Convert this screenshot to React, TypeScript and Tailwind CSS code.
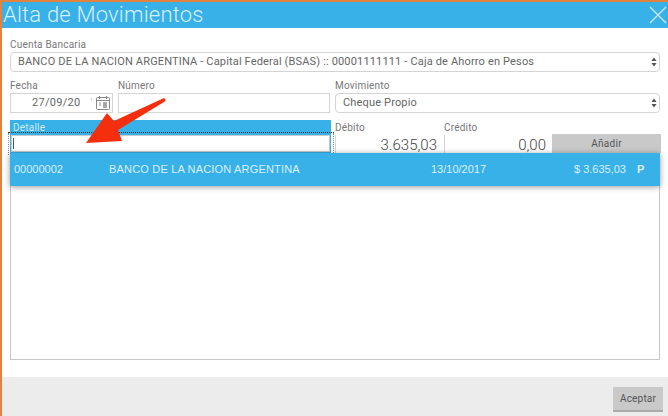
import React from "react";

const ff = { fontFamily: "Roboto, sans-serif" };

function Stepper() {
  return (
    <svg width="6" height="10" viewBox="0 0 6 10" className="shrink-0">
      <path d="M3 0.5 L5.6 4 H0.4 Z M3 9.5 L5.6 6 H0.4 Z" fill="#555" />
    </svg>
  );
}

function SelectBox({ text, className }: { text: string; className: string }) {
  return (
    <div className={`flex h-5 items-center justify-between rounded-[4px] border border-[#d4d4d4] bg-white pl-[7px] pr-[2px] text-[11px] tracking-[0.16px] text-[#666] ${className}`}>
      <span className="whitespace-nowrap">{text}</span>
      <Stepper />
    </div>
  );
}

function Label({ children }: { children: React.ReactNode }) {
  return <div className="h-[12px] text-[10px] leading-[12px] tracking-[0.2px] text-[#777]">{children}</div>;
}

export default function App() {
  return (
    <div style={ff} className="relative flex h-[416px] w-[668px] flex-col overflow-hidden border-l-2 border-t-2 border-[#e2823c] bg-white">
      <header className="flex h-[26px] shrink-0 items-center justify-between bg-[#38b0e8] pl-[1px]">
        <h1 className="text-[22px] font-light leading-[26px] tracking-[0.2px] text-[#d8f0fb]">Alta de Movimientos</h1>
        <svg width="20" height="20" viewBox="0 0 20 20">
          <path d="M2 2 L18 18 M18 2 L2 18" stroke="#cdeaf8" strokeWidth="1.3" fill="none" />
        </svg>
      </header>

      <main className="flex flex-1 flex-col pl-2 pr-[6px] pt-[11px]">
        <Label>Cuenta Bancaria</Label>
        <SelectBox text="BANCO DE LA NACION ARGENTINA - Capital Federal (BSAS) :: 00001111111 - Caja de Ahorro en Pesos" className="mt-[1px] w-[650px]" />

        <div className="mt-[8px] flex gap-[5px]">
          <div className="w-[103px]">
            <Label>Fecha</Label>
            <div className="mt-[1px] flex h-[20px] items-center justify-between border border-[#d4d4d4] pl-[21px] pr-[1px] text-[11px] tracking-[0.3px] text-[#666]">
              <span className="relative whitespace-nowrap">
                27/09/20
                <span className="ml-[10px] text-[#bbb]">'</span>
              </span>
              <svg width="16" height="16" viewBox="0 0 16 16">
                <rect x="1.5" y="2.5" width="13" height="12" rx="1" fill="none" stroke="#888" />
                <path d="M1.5 5.5 H14.5 M4.5 1 V4 M11.5 1 V4" stroke="#888" />
                <path d="M4 8 H6 M8 8 H12 M4 10 H6 M8 10 H12 M8 12 H12 M9 7 V13 M11 7 V13" stroke="#777" strokeWidth="0.8" />
              </svg>
            </div>
          </div>
          <div className="w-[212px]">
            <Label>Número</Label>
            <div className="mt-[1px] h-[20px] border border-[#d4d4d4]" />
          </div>
          <div className="w-[325px]">
            <Label>Movimiento</Label>
            <SelectBox text="Cheque Propio" className="mt-[1px] w-[325px]" />
          </div>
        </div>

        <div className="mt-[7px] flex h-[33px] gap-[4px]">
          <div className="relative w-[321px]">
            <div className="h-[15px] bg-[#38b0e8] pl-[3px] pt-[1px] text-[10px] leading-[13px] tracking-[0.2px] text-[#cdeaf8]">Detalle</div>
            <div className="relative h-[18px] bg-[#38b0e8] px-[1px]">
              <div className="h-[17px] border border-[#ccc] bg-white pl-[1px] pt-[2px]">
                <div className="h-[11px] w-px bg-[#555]" />
              </div>
            </div>
            <div className="absolute -left-[2px] -right-[3px] top-[12px] border-t border-dotted border-[#333]" />
            <div className="absolute -left-[2px] top-[13px] h-[22px] border-l border-dotted border-[#888]" />
            <div className="absolute -right-[3px] top-[13px] h-[22px] border-l border-dotted border-[#888]" />
          </div>
          <div className="w-[105px] pt-[2px]">
            <Label>Débito</Label>
            <div className="mt-[1px] flex h-[20px] items-center justify-end border-l border-[#d4d4d4] pr-[3px] text-[15px] font-light text-[#444]">3.635,03</div>
          </div>
          <div className="w-[108px] pt-[2px]">
            <Label>Crédito</Label>
            <div className="mt-[1px] flex h-[20px] items-center justify-end border-l border-[#d4d4d4] pr-[6px] text-[15px] font-light text-[#444]">0,00</div>
          </div>
          <div className="-ml-[4px] mt-[14px] flex h-[19px] w-[109px] items-center justify-center bg-[#c9c9c9] pb-[1px] text-[10px] tracking-[0.3px] text-[#555]">Añadir</div>
        </div>

        <div className="relative h-[207px] w-[650px] border border-t-0 border-[#c8c8c8]">
          <div className="-ml-px flex h-[33px] w-[650px] items-center bg-[#38b0e8] font-['Liberation_Sans',sans-serif] text-[11px] text-[#d8f0fb] shadow-[0_1px_6px_rgba(0,0,0,0.4)]">
            <span className="ml-[4px] w-[95px]">00000002</span>
            <span className="w-[322px] tracking-[0.18px]">BANCO DE LA NACION ARGENTINA</span>
            <span className="w-[143px]">13/10/2017</span>
            <span className="w-[63px]">$ 3.635,03</span>
            <span className="font-bold">P</span>
          </div>
        </div>
      </main>

      <footer className="flex h-[39px] shrink-0 items-end justify-end bg-[#ececec] pb-[4px] pr-[5px]">
        <div className="flex h-[25px] w-[50px] items-center justify-center border-b-2 border-[#aaa] bg-[#c9c9c9] text-[10px] tracking-[0.2px] text-[#555]">Aceptar</div>
      </footer>

      <svg width="90" height="52" viewBox="0 0 90 52" className="absolute left-[82px] top-[94px]">
        <path d="M80 2 C 82 3, 82 5, 80 6 L 34 34 L 38 45 L 2 47 L 23 17 L 30 25 Z" fill="#f52f0d" />
      </svg>
    </div>
  );
}
